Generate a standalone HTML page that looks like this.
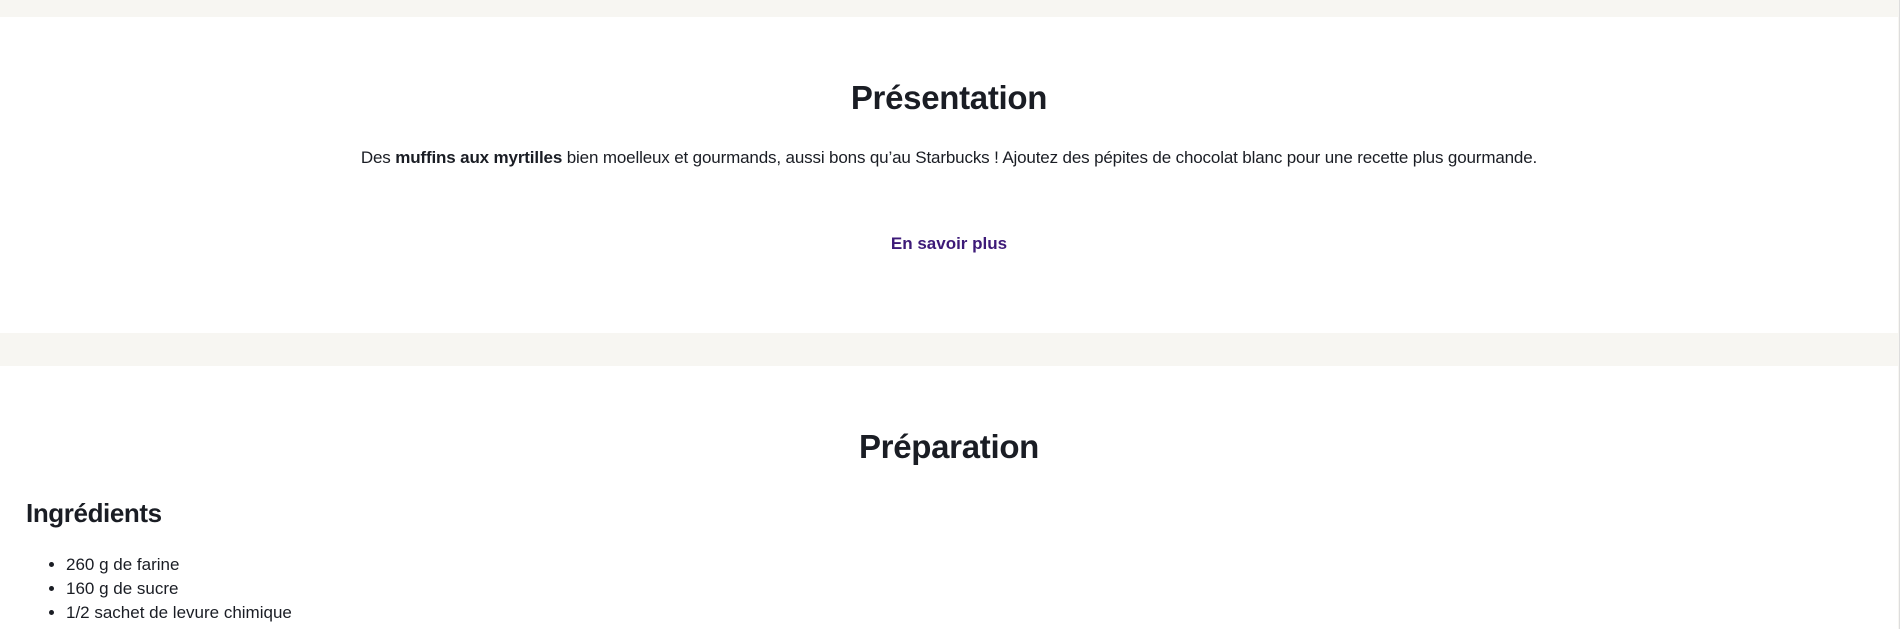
<!DOCTYPE html>
<html><head><meta charset="utf-8"><style>
html,body{margin:0;padding:0;width:1900px;height:629px;overflow:hidden;background:#f7f6f2;font-family:"Liberation Sans",sans-serif;color:#1a1d24}
.w{position:absolute;left:0;width:1898px;background:#fff}
.line{position:absolute;right:0;top:0;width:1px;height:629px;background:#ddd}
.c{position:absolute;left:0;width:1898px;text-align:center;white-space:nowrap}
h2{margin:0;font-size:33px;font-weight:bold;letter-spacing:-0.3px}
</style></head><body>
<div class="w" style="top:17px;height:316px"></div>
<div class="w" style="top:366px;height:263px"></div>
<div class="line"></div>
<div class="c" style="top:79px"><h2>Présentation</h2></div>
<div class="c" style="top:148px;font-size:17px;letter-spacing:-0.15px">Des <b>muffins aux myrtilles</b> bien moelleux et gourmands, aussi bons qu’au Starbucks ! Ajoutez des pépites de chocolat blanc pour une recette plus gourmande.</div>
<div class="c" style="top:234px;font-size:17px;font-weight:bold;color:#3d1a78">En savoir plus</div>
<div class="c" style="top:428px"><h2>Préparation</h2></div>
<div style="position:absolute;left:26px;top:498px;font-size:26px;font-weight:bold;letter-spacing:-0.4px">Ingrédients</div>
<ul style="position:absolute;left:26px;top:553px;margin:0;padding-left:40px;font-size:17px;line-height:24px">
<li>260 g de farine</li><li>160 g de sucre</li><li>1/2 sachet de levure chimique</li></ul>
</body></html>
